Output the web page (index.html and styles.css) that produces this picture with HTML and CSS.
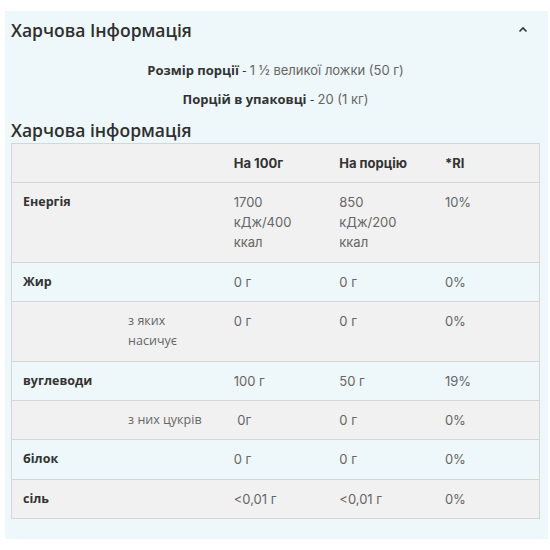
FILE: index.html
```html
<!DOCTYPE html>
<html lang="uk">
<head>
<meta charset="utf-8">
<title>Харчова Інформація</title>
<link rel="stylesheet" href="styles.css">
</head>
<body>
<section class="panel">
  <div class="panel-head">
    <h3 class="panel-title">Харчова Інформація</h3>
    <svg class="chevron" width="10" height="7" viewBox="0 0 10 7"><path d="M1.5 5.5 L5 2 L8.5 5.5" fill="none" stroke="#333" stroke-width="1.6"/></svg>
  </div>
  <div class="serving">
    <p><b>Розмір порції</b> - <span class="val">1 ½ великої ложки (50 г)</span></p>
    <p><b>Порцій в упаковці</b> - <span class="val">20 (1 кг)</span></p>
  </div>
  <h2 class="table-title">Харчова інформація</h2>
  <table class="nutri">
    <thead>
      <tr><th></th><th></th><th>На 100г</th><th>На порцію</th><th>*RI</th></tr>
    </thead>
    <tbody>
      <tr><td class="lbl">Енергія</td><td></td><td class="num">1700 кДж/400 ккал</td><td class="num">850 кДж/200 ккал</td><td class="num">10%</td></tr>
      <tr><td class="lbl">Жир</td><td></td><td class="num">0 г</td><td class="num">0 г</td><td class="num">0%</td></tr>
      <tr><td></td><td class="sub">з яких насичує</td><td class="num">0 г</td><td class="num">0 г</td><td class="num">0%</td></tr>
      <tr><td class="lbl">вуглеводи</td><td></td><td class="num">100 г</td><td class="num">50 г</td><td class="num">19%</td></tr>
      <tr><td></td><td class="sub">з них цукрів</td><td class="num">&nbsp;0г</td><td class="num">0 г</td><td class="num">0%</td></tr>
      <tr><td class="lbl">білок</td><td></td><td class="num">0 г</td><td class="num">0 г</td><td class="num">0%</td></tr>
      <tr><td class="lbl">сіль</td><td></td><td class="num">&lt;0,01 г</td><td class="num">&lt;0,01 г</td><td class="num">0%</td></tr>
    </tbody>
  </table>
</section>
</body>
</html>
```

FILE: styles.css
```css
html, body {
  margin: 0;
  padding: 0;
  background: #ffffff;
}

body {
  font-family: "Open Sans", "Liberation Sans", sans-serif;
  color: #333333;
  padding: 11px 2px 12px 5px;
}

.panel {
  background: #eef7f9;
  padding: 0 8px 20px 6px;
}

.panel-head {
  display: flex;
  align-items: center;
  justify-content: space-between;
  height: 38px;
}

.panel-title {
  margin: 0;
  font-size: 17.5px;
  font-weight: 600;
  line-height: 24px;
  color: #2f2f2f;
}

.chevron {
  margin-right: 12px;
  margin-top: -1px;
}

.serving {
  margin-top: 11px;
  text-align: center;
  font-size: 13px;
  line-height: 20px;
}

.serving p {
  margin: 0 0 9px;
}

.serving b {
  font-weight: 700;
  color: #333333;
}

.serving .val {
  font-family: "Inter", "Open Sans", sans-serif;
  color: #666666;
}

.table-title {
  margin: 0 0 1px;
  font-size: 17.5px;
  font-weight: 600;
  line-height: 24px;
  color: #2f2f2f;
}

.nutri {
  width: 100%;
  table-layout: fixed;
  border-collapse: collapse;
  border: 1px solid #d6d6d6;
  font-size: 13px;
}

.nutri th,
.nutri td {
  text-align: left;
  vertical-align: top;
  padding: 9px 11px 9.4px;
  line-height: 20px;
  border-top: 1px solid #d6d6d6;
}

.nutri thead tr {
  background: #f1f1f1;
}

.nutri tbody tr:nth-child(odd) {
  background: #f1f1f1;
}

.nutri th {
  font-family: "Inter", "Open Sans", sans-serif;
  font-weight: 700;
  font-size: 13px;
  color: #333333;
}

.nutri .lbl {
  font-weight: 700;
  font-size: 12.5px;
  color: #333333;
}

.nutri .sub {
  color: #666666;
  font-size: 12.5px;
}

.nutri .num {
  font-family: "Inter", "Open Sans", sans-serif;
  color: #666666;
  font-size: 13px;
}
```
